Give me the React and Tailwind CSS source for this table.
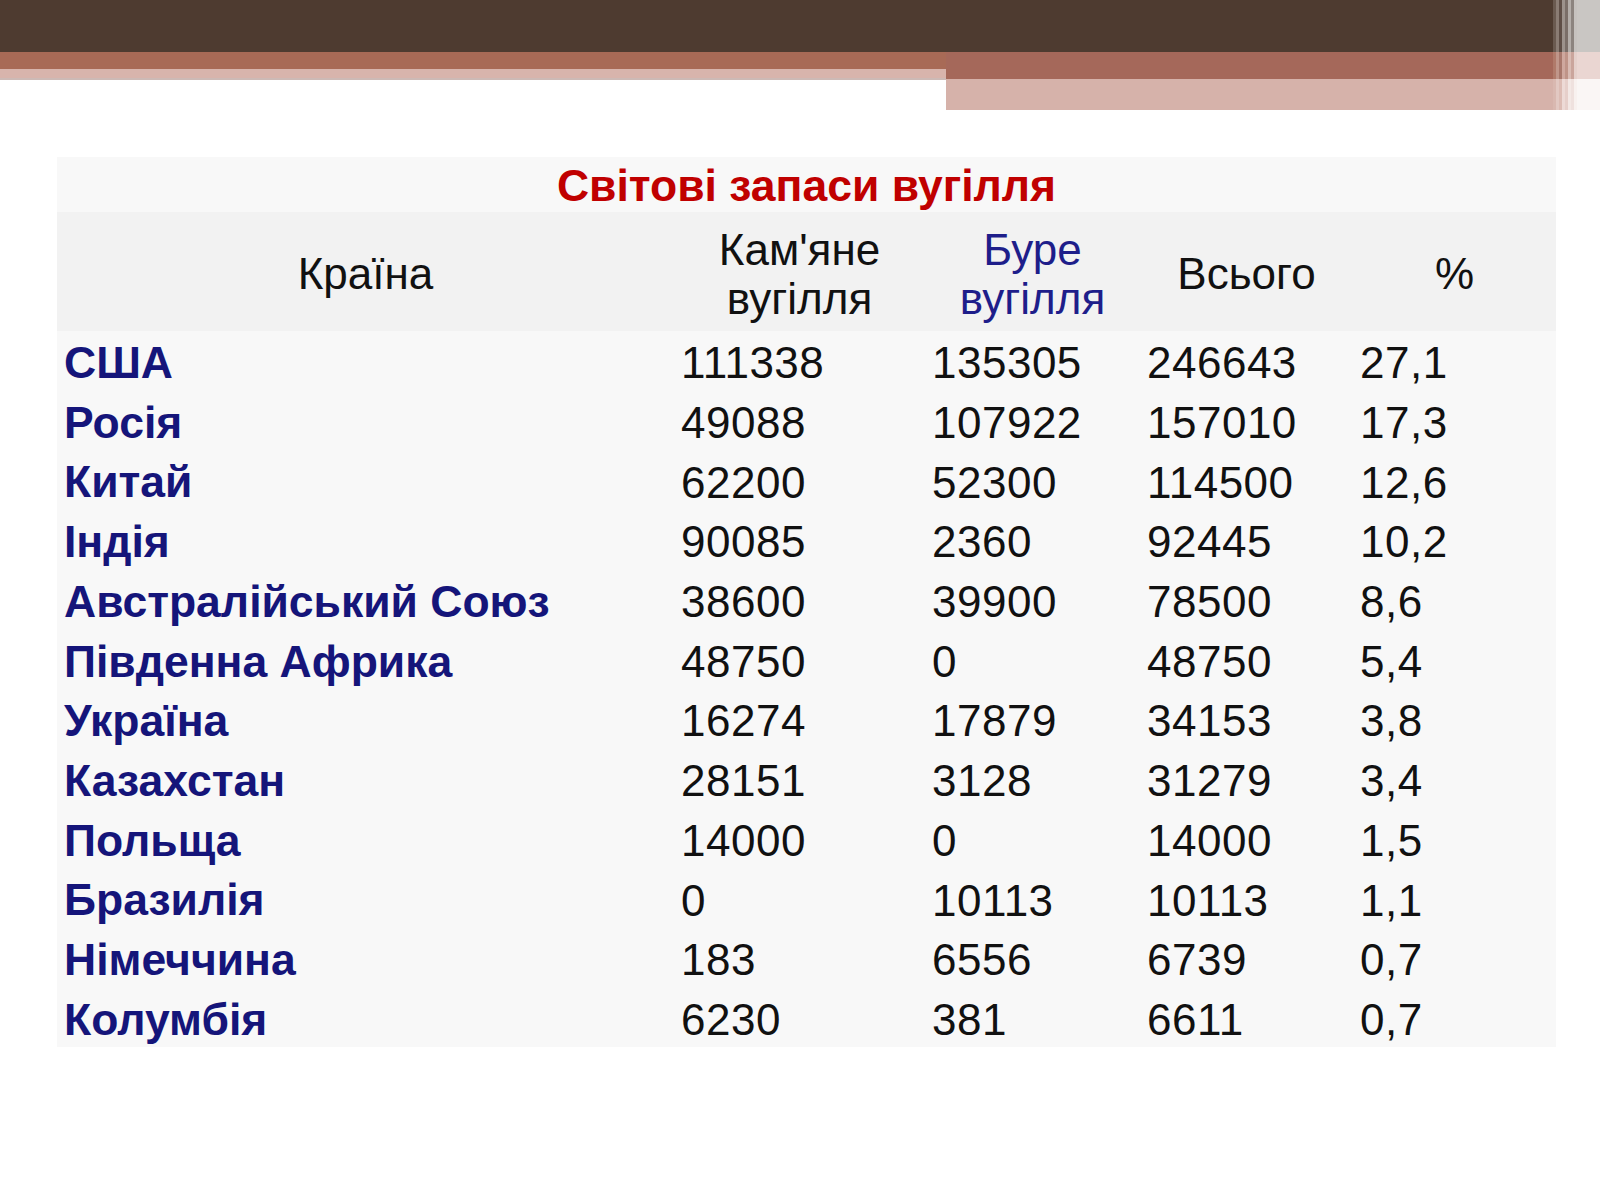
import React from 'react'

const rows = [
  ['США', '111338', '135305', '246643', '27,1'],
  ['Росія', '49088', '107922', '157010', '17,3'],
  ['Китай', '62200', '52300', '114500', '12,6'],
  ['Індія', '90085', '2360', '92445', '10,2'],
  ['Австралійський Союз', '38600', '39900', '78500', '8,6'],
  ['Південна Африка', '48750', '0', '48750', '5,4'],
  ['Україна', '16274', '17879', '34153', '3,8'],
  ['Казахстан', '28151', '3128', '31279', '3,4'],
  ['Польща', '14000', '0', '14000', '1,5'],
  ['Бразилія', '0', '10113', '10113', '1,1'],
  ['Німеччина', '183', '6556', '6739', '0,7'],
  ['Колумбія', '6230', '381', '6611', '0,7'],
]

// fading edge stripes on the right of the banner
const stripes = [
  ['#6a5a50', '#b07a6a', '#d9b8b0'],
  ['#8a7c74', '#c0968a', '#e2c8c2'],
  ['#5e4e46', '#a8786c', '#dcbcb4'],
  ['#9c928c', '#cfa89e', '#eddad6'],
  ['#7a6e68', '#bf9488', '#e6cfca'],
  ['#b4aeaa', '#d9bcb4', '#f3e8e5'],
  ['#8c847f', '#caa59c', '#efe1de'],
  ['#c6c2bf', '#e5d0cb', '#f8f1ef'],
]

function Banner() {
  return (
    <div className="flex h-[110px]">
      <div className="w-[1553px] flex flex-col">
        <div className="h-[52px] bg-[#4e3b30]" />
        <div className="flex flex-1">
          <div className="w-[946px] flex flex-col">
            <div className="h-[17px] bg-[#a86a56]" />
            <div className="h-[11px] bg-[#d8b4ac] border-b-2 border-[#cdbab6]" />
          </div>
          <div className="flex-1 flex flex-col">
            <div className="h-[27px] bg-[#a5685a]" />
            <div className="h-[31px] bg-[#d6b2aa]" />
          </div>
        </div>
      </div>
      {stripes.map((s, i) => (
        <div key={i} className="w-[3px] flex flex-col">
          <div className="h-[52px]" style={{ background: s[0] }} />
          <div className="h-[27px]" style={{ background: s[1] }} />
          <div className="h-[31px]" style={{ background: s[2] }} />
        </div>
      ))}
      <div className="flex-1 flex flex-col">
        <div className="h-[52px] bg-[#c9c6c3]" />
        <div className="h-[27px] bg-[#ead6d2]" />
        <div className="h-[31px] bg-[#faf6f5]" />
      </div>
    </div>
  )
}

export default function App() {
  return (
    <div className="w-[1600px] h-[1200px] bg-white font-['Liberation_Sans',Arial,sans-serif] overflow-hidden">
      <Banner />

      <div className="pl-[57px] pt-[47px]">
        <table className="w-[1499px] table-fixed border-collapse">
          <colgroup>
            <col className="w-[617px]" />
            <col className="w-[251px]" />
            <col className="w-[215px]" />
            <col className="w-[213px]" />
            <col className="w-[203px]" />
          </colgroup>
          <thead>
            <tr className="h-[55px] bg-[#f8f8f8]">
              <th colSpan={5} className="pt-[4px] text-center text-[44.5px] leading-none font-bold text-[#c00000]">
                Світові запаси вугілля
              </th>
            </tr>
            <tr className="h-[119px] bg-[#f2f2f2] text-[44px] leading-[49px] font-normal text-[#111]">
              <th className="pt-[4px] font-normal">Країна</th>
              <th className="pt-[4px] font-normal">Кам'яне<br />вугілля</th>
              <th className="pt-[4px] font-normal text-[#1e1e8a]">Буре<br />вугілля</th>
              <th className="pt-[4px] font-normal">Всього</th>
              <th className="pt-[4px] font-normal">%</th>
            </tr>
          </thead>
          <tbody className="bg-[#f8f8f8]">
            {rows.map((r) => (
              <tr key={r[0]} className="h-[59.7px] text-[44px] leading-none">
                <td className="pl-[7px] pt-[5px] text-[44.5px] font-bold text-[#15157a] whitespace-nowrap">{r[0]}</td>
                <td className="pl-[7px] pt-[5px] tracking-[0.5px] text-[#111]">{r[1]}</td>
                <td className="pl-[7px] pt-[5px] tracking-[0.5px] text-[#111]">{r[2]}</td>
                <td className="pl-[7px] pt-[5px] tracking-[0.5px] text-[#111]">{r[3]}</td>
                <td className="pl-[7px] pt-[5px] tracking-[0.5px] text-[#111]">{r[4]}</td>
              </tr>
            ))}
          </tbody>
        </table>
      </div>
    </div>
  )
}
